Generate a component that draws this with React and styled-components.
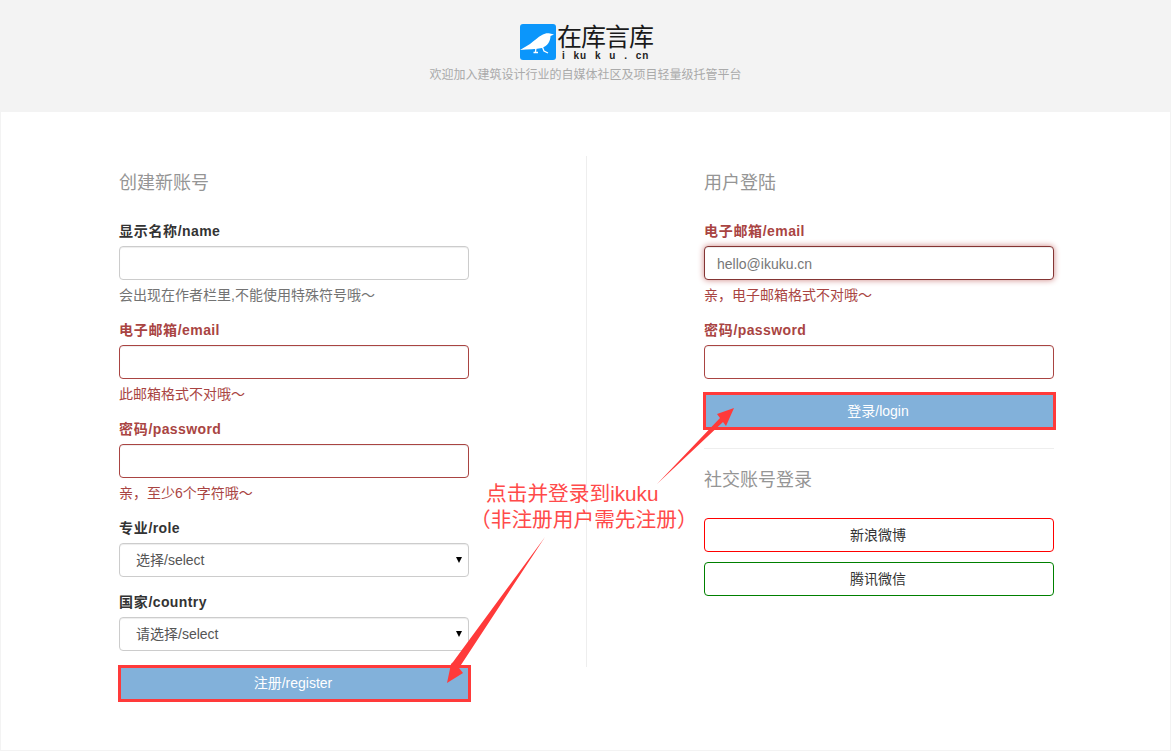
import React from 'react';
import styled, { createGlobalStyle } from 'styled-components';

const FONT = '"Liberation Sans", "Noto Sans CJK SC", sans-serif';

const GlobalStyle = createGlobalStyle`
	* {
		box-sizing: border-box;
	}

	html,
	body {
		margin: 0;
		height: 751px;
		overflow: hidden;
		background: #f3f3f3;
		font-family: ${FONT};
		font-size: 14px;
		line-height: 20px;
		color: #333;
	}
`;

const Page = styled.div`
	position: relative;
	height: 751px;
`;

const Header = styled.header`
	display: flex;
	flex-direction: column;
	align-items: center;
	height: 112px;
	padding-top: 24px;
`;

const Logo = styled.div`
	display: flex;
	gap: 1px;
	height: 36px;
	margin-left: 2px;
`;

const LogoWord = styled.div`
	display: flex;
	flex-direction: column;
	width: 96px;
	color: #1a1a1a;
`;

const LogoCn = styled.span`
	height: 28px;
	font-size: 25px;
	line-height: 27px;
	letter-spacing: -1px;
	white-space: nowrap;
`;

const LogoEn = styled.span`
	padding-left: 5px;
	font-size: 10px;
	font-weight: 700;
	line-height: 8px;
	letter-spacing: 1px;
	word-spacing: 4px;
	white-space: pre;
	color: #222;
`;

const Slogan = styled.p`
	margin: 5px 0 0;
	font-size: 12px;
	line-height: 20px;
	color: #aaa;
`;

const Panel = styled.main`
	display: grid;
	grid-template-columns: 350px 1px 350px;
	column-gap: 117px;
	align-items: start;
	height: 638px;
	margin: 0 1px;
	padding: 44px 0 0 118px;
	background: #fff;
`;

const Divider = styled.div`
	height: 511px;
	background: #eee;
`;

const Title = styled.h3`
	margin: 0 0 11px;
	font-size: 18px;
	font-weight: 400;
	line-height: 54px;
	color: #959595;
`;

const Field = styled.div`
	margin-bottom: 15px;
`;

const Label = styled.label`
	display: block;
	margin-bottom: 5px;
	font-weight: 700;
	letter-spacing: 0.7px;
	color: ${(p) => (p.$error ? '#a94442' : '#333')};

	span {
		letter-spacing: 0.4px;
	}
`;

const Input = styled.input`
	display: block;
	width: 100%;
	height: 34px;
	padding: 7px 12px 5px;
	border: 1px solid ${(p) => (p.$error ? '#a94442' : '#ccc')};
	border-radius: 4px;
	background: #fff;
	font-family: ${FONT};
	font-size: 14px;
	color: #777;
	outline: none;
	box-shadow: ${(p) =>
		p.$focus
			? 'inset 0 1px 1px rgba(0, 0, 0, 0.075), 0 0 6px #ce8483'
			: 'inset 0 1px 1px rgba(0, 0, 0, 0.075)'};
	border-color: ${(p) => p.$focus && '#843534'};
`;

const SelectBox = styled.div`
	position: relative;

	/* the small black arrow of the native select in the shot */
	&::after {
		content: '';
		position: absolute;
		top: 14px;
		right: 7px;
		border-style: solid;
		border-width: 6px 3px 0;
		border-color: #000 transparent transparent;
		pointer-events: none;
	}
`;

const Select = styled.select`
	display: block;
	width: 100%;
	height: 34px;
	padding: 6px 16px;
	border: 1px solid #ccc;
	border-radius: 4px;
	background: #fff;
	font-family: ${FONT};
	font-size: 14px;
	color: #555;
	box-shadow: inset 0 1px 1px rgba(0, 0, 0, 0.075);
	appearance: none;
`;

const Help = styled.p`
	margin: 5px 0 0;
	color: ${(p) => (p.$error ? '#a94442' : '#737373')};
`;

const Submit = styled.button`
	position: relative;
	display: block;
	width: 100%;
	height: 34px;
	padding: 0 2px 2px 0;
	border: 0;
	background: #82b1da;
	font-family: ${FONT};
	font-size: 14px;
	color: #fff;

	/* red frame drawn over the shot by hand, not quite centred */
	&::after {
		content: '';
		position: absolute;
		top: ${(p) => p.$frameTop}px;
		left: -1px;
		right: -2px;
		bottom: -2px;
		border: 3px solid #ff3a3a;
	}
`;

const Rule = styled.hr`
	height: 1px;
	margin: 20px 0 4px;
	border: 0;
	background: #eee;
`;

const SocialList = styled.div`
	display: flex;
	flex-direction: column;
	gap: 10px;
`;

const SocialButton = styled.button`
	height: 34px;
	padding: 0 2px 2px 0;
	border: 1px solid ${(p) => p.$color};
	border-radius: 4px;
	background: #fff;
	font-family: ${FONT};
	font-size: 14px;
	color: #333;
`;

const Callout = styled.div`
	position: absolute;
	top: 481px;
	left: 470px;
	font-size: 20.7px;
	line-height: 26px;
	color: #ff4a4a;
	white-space: nowrap;
`;

const CalloutLine = styled.div`
	padding-left: ${(p) => p.$indent || 0}px;
`;

const Arrows = styled.svg`
	position: absolute;
	top: 0;
	left: 0;
	pointer-events: none;
`;

const BirdMark = () => (
	<svg width="36" height="36" viewBox="0 0 36 36">
		<rect width="36" height="36" rx="3" fill="#0b96fb" />
		<path
			d="M0 26 L10 20 C14 17 18 13 22 11 C25 9 28 9 30 9.5 L34 10.5 L30.5 12 C30.5 17 27.5 22 22 24 C16 25.5 8 25 0 26 Z"
			fill="#fff"
		/>
		<path d="M16 23 L15.5 28 M13.5 28.5 H18 M22 22 L24 27 L28 29" stroke="#fff" strokeWidth="1.3" fill="none" />
	</svg>
);

const App = () => (
	<Page>
		<GlobalStyle />
		<Header>
			<Logo>
				<BirdMark />
				<LogoWord>
					<LogoCn>在库言库</LogoCn>
					<LogoEn>i ku k u . cn</LogoEn>
				</LogoWord>
			</Logo>
			<Slogan>欢迎加入建筑设计行业的自媒体社区及项目轻量级托管平台</Slogan>
		</Header>

		<Panel>
			<section>
				<Title>创建新账号</Title>
				<Field>
					<Label>
						显示名称<span>/name</span>
					</Label>
					<Input />
					<Help>会出现在作者栏里,不能使用特殊符号哦～</Help>
				</Field>
				<Field>
					<Label $error>
						电子邮箱<span>/email</span>
					</Label>
					<Input $error />
					<Help $error>此邮箱格式不对哦～</Help>
				</Field>
				<Field>
					<Label $error>
						密码<span>/password</span>
					</Label>
					<Input $error type="password" />
					<Help $error>亲，至少6个字符哦～</Help>
				</Field>
				<Field>
					<Label>
						专业<span>/role</span>
					</Label>
					<SelectBox>
						<Select>
							<option>选择/select</option>
						</Select>
					</SelectBox>
				</Field>
				<Field>
					<Label>
						国家<span>/country</span>
					</Label>
					<SelectBox>
						<Select>
							<option>请选择/select</option>
						</Select>
					</SelectBox>
				</Field>
				<Submit $frameTop={-1}>注册/register</Submit>
			</section>

			<Divider />

			<section>
				<Title>用户登陆</Title>
				<Field>
					<Label $error>
						电子邮箱<span>/email</span>
					</Label>
					<Input $error $focus defaultValue="hello@ikuku.cn" />
					<Help $error>亲，电子邮箱格式不对哦～</Help>
				</Field>
				<Field>
					<Label $error>
						密码<span>/password</span>
					</Label>
					<Input $error type="password" />
				</Field>
				<Submit $frameTop={-2}>登录/login</Submit>
				<Rule />
				<Title>社交账号登录</Title>
				<SocialList>
					<SocialButton $color="#f00">新浪微博</SocialButton>
					<SocialButton $color="#008000">腾讯微信</SocialButton>
				</SocialList>
			</section>
		</Panel>

		<Callout>
			<CalloutLine $indent={16}>点击并登录到ikuku</CalloutLine>
			<CalloutLine>（非注册用户需先注册）</CalloutLine>
		</Callout>

		<Arrows width="1171" height="751" viewBox="0 0 1171 751">
			<polygon points="545,537 459,668 463,673 447,683 451,664 453,662" fill="#ff3a3a" />
			<polygon points="657,484 720,418 717,414 734,408 726,426 723,422" fill="#ff3a3a" />
		</Arrows>
	</Page>
);

export default App;
